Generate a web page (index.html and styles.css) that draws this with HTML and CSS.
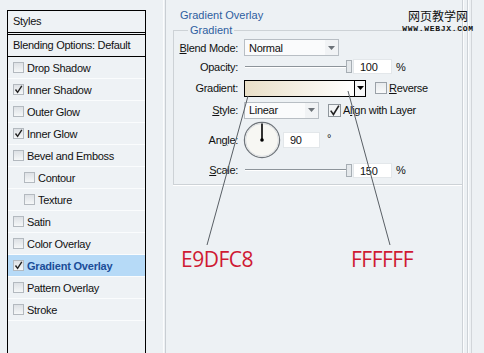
FILE: index.html
```html
<!DOCTYPE html>
<html lang="en">
<head>
  <meta charset="UTF-8">
  <title>Layer Style - Gradient Overlay</title>
  <link rel="stylesheet" href="styles.css">
</head>
<body>
  <div class="window">
    <div class="styles-panel">
      <div class="panel-title">Styles</div>
      <div class="panel-blend">Blending Options: Default</div>
      <ul class="style-list">
        <li><span class="box"></span>Drop Shadow</li>
        <li><span class="box"><svg viewBox="0 0 11 11"><path d="M2.5 5.5 L4.6 8.3 L8.8 1.8"/></svg></span>Inner Shadow</li>
        <li><span class="box"></span>Outer Glow</li>
        <li><span class="box"><svg viewBox="0 0 11 11"><path d="M2.5 5.5 L4.6 8.3 L8.8 1.8"/></svg></span>Inner Glow</li>
        <li><span class="box"></span>Bevel and Emboss</li>
        <li class="sub"><span class="box"></span>Contour</li>
        <li class="sub"><span class="box"></span>Texture</li>
        <li><span class="box"></span>Satin</li>
        <li><span class="box"></span>Color Overlay</li>
        <li class="active"><span class="box"><svg viewBox="0 0 11 11"><path d="M2.5 5.5 L4.6 8.3 L8.8 1.8"/></svg></span>Gradient Overlay</li>
        <li><span class="box"></span>Pattern Overlay</li>
        <li><span class="box"></span>Stroke</li>
        <li class="empty"></li>
      </ul>
    </div>

    <div class="divider"></div>

    <div class="effect">
      <div class="effect-title">Gradient Overlay</div>
      <fieldset class="group">
        <legend>Gradient</legend>
        <div class="form">
          <label><u>B</u>lend Mode:</label>
          <div class="select select-wide">Normal<span class="arrow"><svg viewBox="0 0 7 4"><path d="M0 0 H7 L3.5 4 Z"/></svg></span></div>

          <label>Opacity:</label>
          <div class="field">
            <div class="slider"><span class="track"></span><span class="thumb"></span></div>
            <span class="num">100</span><span class="unit">%</span>
          </div>

          <label>Gradient:</label>
          <div class="field">
            <span class="gradient-bar"></span><span class="gradient-arrow"><svg viewBox="0 0 7 4"><path d="M0 0 H7 L3.5 4 Z"/></svg></span>
            <span class="box box-reverse"></span><span class="opt"><u>R</u>everse</span>
          </div>

          <label><u>S</u>tyle:</label>
          <div class="field">
            <div class="select select-short">Linear<span class="arrow"><svg viewBox="0 0 7 4"><path d="M0 0 H7 L3.5 4 Z"/></svg></span></div>
            <span class="box box-align"><svg viewBox="0 0 11 11"><path d="M2.3 5.6 L4.6 8.8 L9.2 1.4"/></svg></span><span class="opt">A<u>l</u>ign with Layer</span>
          </div>

          <label>An<u>g</u>le:</label>
          <div class="field">
            <svg class="dial" width="38" height="38" viewBox="0 0 38 38">
              <circle cx="19" cy="19" r="17.6" class="dial-face"/>
              <circle cx="19" cy="19" r="16.4" class="dial-inner"/>
              <line x1="19" y1="19" x2="19" y2="2.5"/>
              <circle cx="19" cy="19" r="1.8" class="dial-pin"/>
            </svg>
            <span class="num num-angle">90</span><span class="unit unit-deg">°</span>
          </div>

          <label><u>S</u>cale:</label>
          <div class="field">
            <div class="slider"><span class="track"></span><span class="thumb"></span></div>
            <span class="num">150</span><span class="unit">%</span>
          </div>
        </div>
      </fieldset>
    </div>

    <div class="gutter"></div>
  </div>

  <div class="watermark">
    <div class="wm-cn">网页教学网</div>
    <div class="wm-url">WWW.WEBJX.COM</div>
  </div>

  <!-- annotation: gradient stop colours -->
  <div class="notes">
    <svg class="leaders" width="484" height="353">
      <line x1="248" y1="96" x2="207" y2="245"/>
      <line x1="348" y1="91" x2="390" y2="245"/>
    </svg>
    <span class="note note-start">E9DFC8</span>
    <span class="note note-end">FFFFFF</span>
  </div>
</body>
</html>
```

FILE: styles.css
```css
body {
  margin: 0;
  background: #edf1f4;
  font: 11px "Liberation Sans", Arial, sans-serif;
  letter-spacing: -0.3px;
  color: #111;
}
.window {
  display: flex;
  height: 353px;
  overflow: hidden;
}

/* left list */
.styles-panel {
  flex: none;
  width: 139px;
  margin: 10px 0 0 7px;
  border: 1px solid #000;
  border-bottom: none;
  box-sizing: border-box;
  background: #eef2f5;
}
.panel-title {
  height: 21px;
  line-height: 21px;
  padding-left: 5px;
  border-bottom: 3px double #000;
}
.panel-blend {
  height: 21px;
  line-height: 21px;
  padding-left: 5px;
  border-bottom: 1px solid #000;
}
.style-list {
  list-style: none;
  margin: 0;
  padding: 0;
}
.style-list li {
  display: flex;
  align-items: center;
  height: 22px;
  box-sizing: border-box;
  padding-left: 5px;
  border-bottom: 1px solid #fafcfd;
}
.style-list li.sub {
  padding-left: 16px;
}
.style-list li.active {
  background: #b6daf7;
  color: #1b4d98;
  font-weight: 700;
  letter-spacing: -0.2px;
}
.style-list li.empty {
  border-bottom: none;
}

.box {
  flex: none;
  display: inline-flex;
  width: 11px;
  height: 11px;
  box-sizing: border-box;
  border: 1px solid #b3b9bf;
  background: linear-gradient(#dde1e5, #f5f7f8);
  margin-right: 3px;
}
.box svg {
  width: 11px;
  height: 11px;
  margin: -1px;
}
.box path {
  fill: none;
  stroke: #222;
  stroke-width: 1.4;
}

.divider {
  flex: none;
  width: 3px;
  margin-left: 17px;
  box-sizing: border-box;
  border-left: 1px solid #fbfcfd;
  border-right: 1px solid #c9ced3;
}

/* effect settings */
.effect {
  flex: none;
  width: 296px;
}
.effect-title {
  padding: 9px 0 0 14px;
  line-height: 13px;
  color: #2d5e9f;
  letter-spacing: 0;
}
.group {
  margin: 2px 0 0 7px;
  padding: 0 0 4px 0;
  border: 1px solid #cdd2d6;
  border-right: none;
  min-width: 0;
  box-shadow: 0 1px 0 #fff;
}
.group legend {
  margin-left: 14px;
  padding: 0 2px;
  line-height: 13px;
  color: #2d5e9f;
  letter-spacing: 0;
}
.form {
  display: grid;
  grid-template-columns: 64px auto;
  grid-template-rows: 19px 19px 24px 20px 40px 20px;
  column-gap: 6px;
  align-items: center;
  padding-top: 1px;
}
.form label {
  justify-self: end;
}
.field {
  display: flex;
  align-items: center;
}

.select {
  display: flex;
  align-items: center;
  height: 17px;
  box-sizing: border-box;
  border: 1px solid #b8bec4;
  background: #fafbfc;
  padding-left: 4px;
}
.select-wide {
  width: 95px;
}
.select-short {
  width: 75px;
}
.select .arrow {
  margin-left: auto;
  width: 13px;
  height: 15px;
  display: flex;
  align-items: center;
  justify-content: center;
  background: #f1f3f5;
}
.select .arrow svg {
  width: 7px;
  height: 4px;
  fill: #6c7278;
}

.slider {
  display: flex;
  align-items: center;
  width: 107px;
  margin-left: 1px;
  height: 13px;
}
.track {
  flex: 1;
  height: 0;
  border-top: 1px solid #8d949a;
  border-bottom: 1px solid #fff;
}
.thumb {
  width: 6px;
  height: 13px;
  box-sizing: border-box;
  border: 1px solid #a7aeb4;
  background: #e4e8eb;
}
.num {
  width: 39px;
  height: 15px;
  box-sizing: border-box;
  margin-left: 1px;
  padding-left: 6px;
  line-height: 14px;
  background: #fff;
  border: 1px solid #e3e7ea;
}
.unit {
  margin-left: 4px;
}

.gradient-bar {
  width: 111px;
  height: 17px;
  box-sizing: border-box;
  border: 1px solid #000;
  background: linear-gradient(to right, #e9dfc8, #fff);
}
.gradient-arrow {
  width: 11px;
  height: 17px;
  box-sizing: border-box;
  border: 1px solid #000;
  border-left: none;
  display: flex;
  align-items: center;
  justify-content: center;
  background: #f7f8f9;
}
.gradient-arrow svg {
  width: 7px;
  height: 4px;
  fill: #000;
}
.box-reverse {
  width: 12px;
  height: 12px;
  margin-left: 9px;
  border-color: #9aa1a8;
  background: linear-gradient(#e7eaed, #f8f9fa);
}
.box-align {
  width: 13px;
  height: 13px;
  margin-left: 9px;
  border-color: #8f969c;
  background: #f3f5f6;
}
.box-align svg {
  width: 13px;
  height: 13px;
}
.opt {
  margin-left: -1px;
}

.dial {
  margin-left: -1px;
}
.dial-face {
  fill: #f7f7f3;
  stroke: #6e747a;
  stroke-width: 1.2;
}
.dial-inner {
  fill: none;
  stroke: #dcdfe2;
  stroke-width: 1;
}
.dial line {
  stroke: #000;
  stroke-width: 1.6;
}
.dial-pin {
  fill: #000;
}
.num-angle {
  width: 37px;
  height: 16px;
  margin-left: 2px;
}
.unit-deg {
  margin-left: 7px;
  margin-top: -4px;
}

.gutter {
  flex: 1;
  background: linear-gradient(to right,
    #cdd2d7 0, #cdd2d7 1px, #fbfcfd 1px, #fbfcfd 2px,
    transparent 2px, transparent 5px,
    #cdd2d7 5px, #cdd2d7 6px, #fbfcfd 6px, #fbfcfd 7px,
    transparent 7px, transparent 9px,
    #d2d6da 9px, #d2d6da 10px, transparent 10px);
}

/* watermark */
.watermark {
  position: absolute;
  top: 8px;
  left: 402px;
  width: 72px;
  text-align: center;
  letter-spacing: 0;
}
.wm-cn {
  font: 12px "Noto Sans CJK SC", sans-serif;
  line-height: 16px;
  color: #111;
}
.wm-url {
  font: bold 8px "Liberation Mono", monospace;
  line-height: 9px;
  letter-spacing: 0.7px;
  color: #111;
}

/* annotations */
.notes {
  position: absolute;
  top: 0;
  left: 0;
  width: 484px;
  height: 353px;
  pointer-events: none;
}
.leaders line {
  stroke: #595f65;
  stroke-width: 1;
}
.note {
  position: absolute;
  top: 245px;
  font: 21px "Open Sans", "Liberation Sans", sans-serif;
  letter-spacing: -0.5px;
  color: #cf1a33;
}
.note-start {
  left: 181px;
}
.note-end {
  left: 351px;
}
```
